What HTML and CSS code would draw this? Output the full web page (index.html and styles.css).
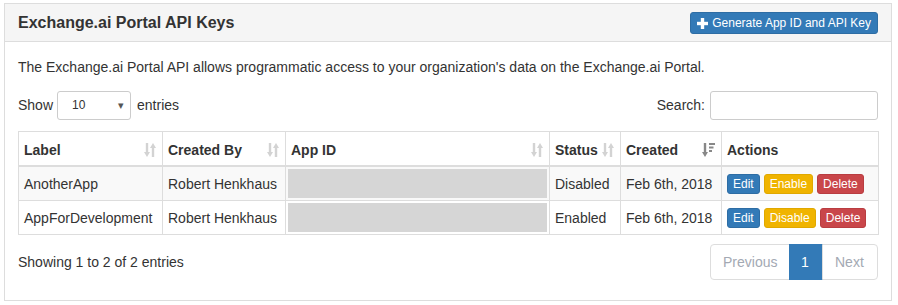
FILE: index.html
```html
<!DOCTYPE html>
<html>
<head>
<meta charset="utf-8">
<link rel="stylesheet" href="styles.css">
</head>
<body>
<div class="panel">
  <div class="panel-heading">
    <h3 class="panel-title">Exchange.ai Portal API Keys</h3>
    <button class="btn btn-primary btn-sm"><svg class="plus" width="11" height="11" viewBox="0 0 11 11"><rect x="3.8" y="0" width="3.4" height="11" fill="#fff"/><rect x="0" y="3.8" width="11" height="3.4" fill="#fff"/></svg>Generate App ID and API Key</button>
  </div>
  <div class="panel-body">
    <p class="desc">The Exchange.ai Portal API allows programmatic access to your organization's data on the Exchange.ai Portal.</p>
    <div class="controls">
      <label class="length">Show <span class="select"><span>10</span><span class="caret">▾</span></span> entries</label>
      <label class="search">Search: <span class="input"></span></label>
    </div>
    <table class="grid">
      <thead>
        <tr>
          <th class="c-label"><div class="th-in"><span>Label</span><svg class="sort" width="12" height="16" viewBox="0 0 12 16"><path d="M3 1v10" stroke="#d3d3d3" stroke-width="2.4"/><path d="M0 10h6l-3 5z" fill="#d3d3d3"/><path d="M9 15V5" stroke="#d3d3d3" stroke-width="2.4"/><path d="M6 6h6L9 1z" fill="#d3d3d3"/></svg></div></th>
          <th class="c-by"><div class="th-in"><span>Created By</span><svg class="sort" width="12" height="16" viewBox="0 0 12 16"><path d="M3 1v10" stroke="#d3d3d3" stroke-width="2.4"/><path d="M0 10h6l-3 5z" fill="#d3d3d3"/><path d="M9 15V5" stroke="#d3d3d3" stroke-width="2.4"/><path d="M6 6h6L9 1z" fill="#d3d3d3"/></svg></div></th>
          <th class="c-id"><div class="th-in"><span>App ID</span><svg class="sort" width="12" height="16" viewBox="0 0 12 16"><path d="M3 1v10" stroke="#d3d3d3" stroke-width="2.4"/><path d="M0 10h6l-3 5z" fill="#d3d3d3"/><path d="M9 15V5" stroke="#d3d3d3" stroke-width="2.4"/><path d="M6 6h6L9 1z" fill="#d3d3d3"/></svg></div></th>
          <th class="c-status"><div class="th-in"><span>Status</span><svg class="sort" width="12" height="16" viewBox="0 0 12 16"><path d="M3 1v10" stroke="#d3d3d3" stroke-width="2.4"/><path d="M0 10h6l-3 5z" fill="#d3d3d3"/><path d="M9 15V5" stroke="#d3d3d3" stroke-width="2.4"/><path d="M6 6h6L9 1z" fill="#d3d3d3"/></svg></div></th>
          <th class="c-created"><div class="th-in"><span>Created</span><svg class="sort" width="13" height="16" viewBox="0 0 13 16"><path d="M3 1v10" stroke="#888" stroke-width="2.4"/><path d="M0 10h6l-3 5z" fill="#888"/><path d="M7 2h6M7 5.5h4.5M7 9h3" stroke="#888" stroke-width="2"/></svg></div></th>
          <th class="c-actions"><div class="th-in"><span>Actions</span></div></th>
        </tr>
      </thead>
      <tbody>
        <tr class="odd">
          <td>AnotherApp</td>
          <td>Robert Henkhaus</td>
          <td class="id-cell"><div class="redacted"></div></td>
          <td>Disabled</td>
          <td>Feb 6th, 2018</td>
          <td class="act"><div class="btns"><button class="btn btn-xs btn-primary">Edit</button><button class="btn btn-xs btn-warning">Enable</button><button class="btn btn-xs btn-danger">Delete</button></div></td>
        </tr>
        <tr>
          <td>AppForDevelopment</td>
          <td>Robert Henkhaus</td>
          <td class="id-cell"><div class="redacted"></div></td>
          <td>Enabled</td>
          <td>Feb 6th, 2018</td>
          <td class="act"><div class="btns"><button class="btn btn-xs btn-primary">Edit</button><button class="btn btn-xs btn-warning">Disable</button><button class="btn btn-xs btn-danger">Delete</button></div></td>
        </tr>
      </tbody>
    </table>
    <div class="footer">
      <div class="info">Showing 1 to 2 of 2 entries</div>
      <ul class="pagination">
        <li class="page disabled first">Previous</li>
        <li class="page active">1</li>
        <li class="page disabled last">Next</li>
      </ul>
    </div>
  </div>
</div>
</body>
</html>
```
FILE: styles.css
```css
* { box-sizing: border-box; }
html, body { margin: 0; padding: 0; background: #fff; }
body {
  padding: 3px 6px 0 4px;
  font-family: "Liberation Sans", Arial, sans-serif;
  font-size: 14px;
  line-height: 20px;
  color: #333;
}
.panel {
  width: 888px;
  height: 298px;
  border: 1px solid #ddd;
  border-radius: 0;
  background: #fff;
}
.panel-heading {
  height: 38px;
  background: #f5f5f5;
  border-bottom: 1px solid #ddd;
  padding: 0 13px;
  display: flex;
  align-items: center;
  justify-content: space-between;
}
.panel-title {
  margin: 0;
  font-size: 16px;
  font-weight: bold;
  color: #333;
  line-height: 20px;
}
.btn {
  font-family: "Liberation Sans", Arial, sans-serif;
  border: 1px solid transparent;
  color: #fff;
  cursor: pointer;
  display: inline-flex;
  align-items: center;
}
.btn-sm {
  height: 22px;
  font-size: 12px;
  padding: 0 6px 0 6px;
  border-radius: 3px;
  margin-top: 1px;
}
.plus { margin-right: 4px; }
.btn-primary { background: #337ab7; border-color: #2e6da4; }
.btn-warning { background: #f0b400; border-color: #e0a800; }
.btn-danger { background: #c9464a; border-color: #b93d41; }
.panel-body {
  padding: 15px 13px 0 13px;
}
.desc { margin: 0 0 13px 0; }
.controls {
  display: flex;
  justify-content: space-between;
  align-items: center;
  height: 30px;
  margin-bottom: 11px;
}
.length, .search {
  display: flex;
  align-items: center;
  font-weight: normal;
}
.select {
  display: inline-flex;
  align-items: center;
  justify-content: space-between;
  width: 74px;
  height: 29px;
  margin: 0 6px 0 4px;
  border: 1px solid #ccc;
  border-radius: 3px;
  padding: 0 6px 0 14px;
  font-size: 12px;
}
.caret { font-size: 11px; color: #555; }
.input {
  display: inline-block;
  width: 168px;
  height: 29px;
  margin-left: 5px;
  border: 1px solid #ccc;
  border-radius: 3px;
}
.grid {
  width: 860px;
  border-collapse: collapse;
  table-layout: fixed;
  border: 1px solid #ddd;
}
.grid th, .grid td {
  border: 1px solid #ddd;
  text-align: left;
  white-space: nowrap;
}
.grid th {
  padding: 8px 6px 5px 5px;
  font-weight: bold;
  line-height: 20px;
  border-bottom: 2px solid #ddd;
}
.th-in {
  display: flex;
  justify-content: space-between;
  align-items: center;
}
.sort { flex: none; }
.grid td {
  padding: 8px 5px 6px 5px;
  line-height: 19px;
}
.grid tr.odd td { background: #f9f9f9; }
.c-label { width: 144px; }
.c-by { width: 123px; }
.c-id { width: 264px; }
.c-status { width: 71px; }
.c-created { width: 101px; }
.c-actions { width: 157px; }
.grid td.id-cell { padding: 2px 2px; }
.redacted { height: 29px; background: #d6d6d6; }
.grid td.act { padding: 6px 5px; }
.btns { display: flex; gap: 4px; }
.btn-xs {
  font-size: 12px;
  height: 20px;
  line-height: 18px;
  padding: 0 5px;
  border-radius: 3px;
}
.footer {
  display: flex;
  justify-content: space-between;
  align-items: center;
  margin-top: 9px;
}
.pagination {
  display: flex;
  list-style: none;
  margin: 0;
  padding: 0;
}
.page {
  height: 36px;
  padding: 7px 12px;
  border: 1px solid #ddd;
  margin-left: -1px;
  line-height: 20px;
}
.page.disabled { color: #a3a9b3; }
.page.first { border-radius: 4px 0 0 4px; margin-left: 0; width: 80px; }
.page.last { border-radius: 0 4px 4px 0; width: 56px; }
.page.active { background: #337ab7; border-color: #337ab7; color: #fff; width: 34px; padding: 7px 11px; }
```
